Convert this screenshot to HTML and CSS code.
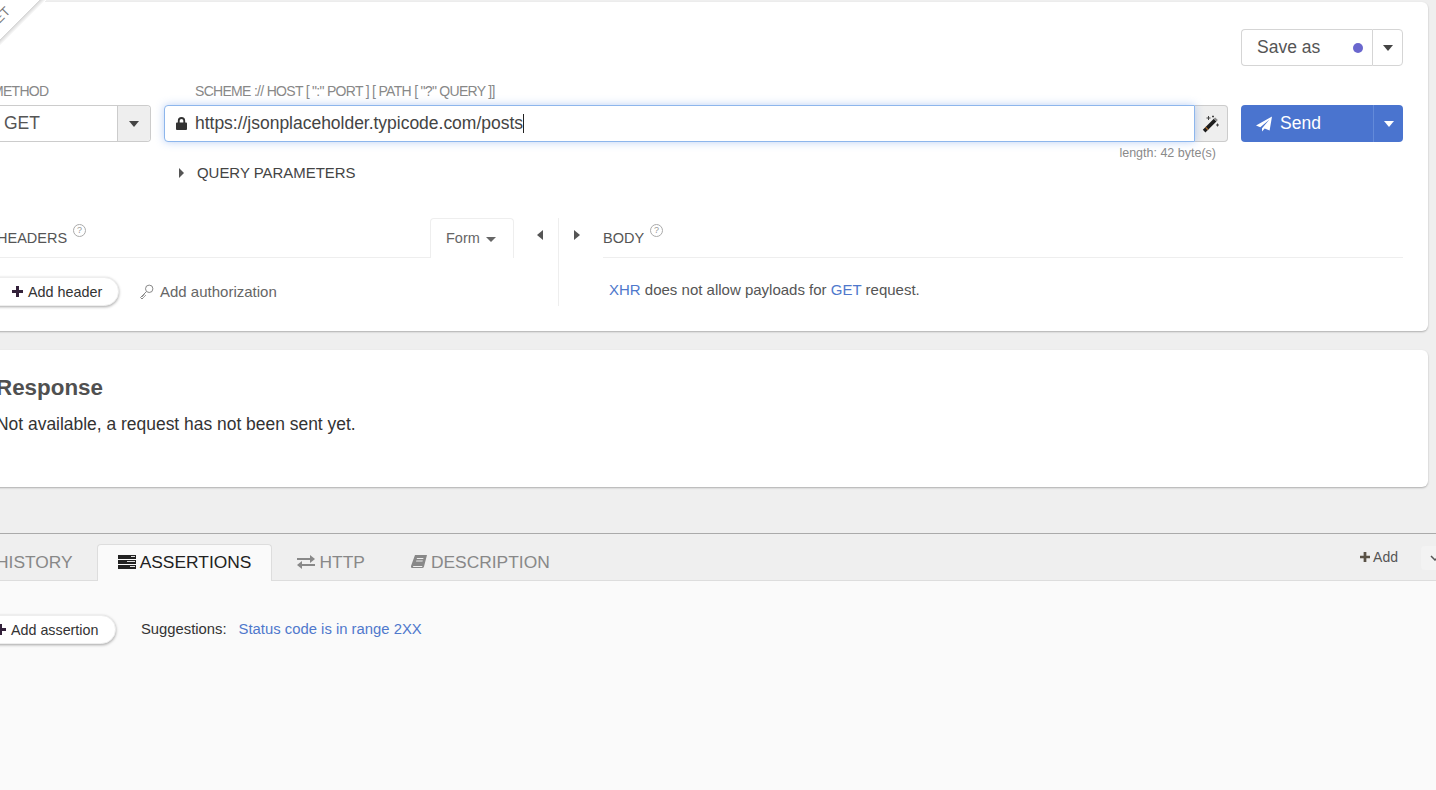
FILE: index.html
```html
<!DOCTYPE html>
<html lang="en">
<head>
<meta charset="utf-8">
<title>Request</title>
<link rel="stylesheet" href="styles.css">
</head>
<body>
<main class="page">
  <section class="card request">
    <div class="ribbon"><span class="ribbon-text">GET</span></div>
    <div class="save-row">
      <div class="split save">
        <button class="split-main save-main"><span>Save as</span><i class="dot"></i></button>
        <button class="split-caret"><i class="caret dark"></i></button>
      </div>
    </div>
    <div class="form-row">
      <div class="method-col">
        <label class="field-label">METHOD</label>
        <div class="select">
          <span class="select-value">GET</span>
          <span class="addon"><i class="caret dark"></i></span>
        </div>
      </div>
      <div class="url-col">
        <label class="field-label url-label">SCHEME :// HOST [ ":" PORT ] [ PATH [ "?" QUERY ]]</label>
        <div class="url-group">
          <div class="url-input">
            <svg class="lock" viewBox="0 0 12 14" width="11" height="13"><path fill="#333" d="M1 6h1V4a4 4 0 0 1 8 0v2h1a1 1 0 0 1 1 1v6a1 1 0 0 1-1 1H1a1 1 0 0 1-1-1V7a1 1 0 0 1 1-1zm3 0h4V4a2 2 0 0 0-4 0z"/></svg>
            <span class="url-text">https://jsonplaceholder.typicode.com/posts</span><i class="cursor"></i>
          </div>
          <span class="wand">
            <svg viewBox="0 0 18 18" width="18" height="18"><path fill="#1c1c1c" d="M.8 14.800 11.800 3.800l2.600 2.600L3.400 17.400z"/><path fill="#a8692c" d="m3.900 11.700 2.600 2.600-.9.900L3 12.600z"/><path fill="#8a8a8a" d="m11.800 3.800 1.400-1.400 2.600 2.600-1.400 1.400z"/><path stroke="#444" stroke-width="1" d="M6.500 1v4M4.500 3h4M15.500 8.500v3M14 10h3M11 .5v2M10 1.500h2"/></svg>
          </span>
        </div>
        <div class="length">length: 42 byte(s)</div>
        <div class="query"><i class="tri-right small"></i><span>QUERY PARAMETERS</span></div>
      </div>
      <div class="send-col">
        <div class="split send">
          <button class="split-main send-main">
            <svg viewBox="0 0 16 16" width="16" height="16"><path fill="#fff" d="M16 .5 13.600 14.500 8.700 12.400 6 15.500V12.300L13.500 3.500 4.300 11.300 0 9.500z"/></svg>
            <span>Send</span>
          </button>
          <button class="split-caret send-caret"><i class="caret light"></i></button>
        </div>
      </div>
    </div>
    <div class="editors">
      <div class="headers-col">
        <div class="editor-head">
          <span class="editor-title">HEADERS</span><span class="help">?</span>
          <span class="form-tab">Form <i class="caret small"></i></span>
        </div>
        <div class="headers-actions">
          <button class="pill">
            <svg class="plus" viewBox="0 0 11 11" width="11" height="11"><path fill="#33213a" d="M4 0h3v4h4v3H7v4H4V7H0V4h4z"/></svg>
            Add header</button>
          <span class="auth">
            <svg viewBox="0 0 15 16" width="15" height="16" fill="none" stroke="#888"><circle cx="10.200" cy="4.800" r="3.700"/><path d="M7.500 7.500 1.500 13.500l1.500 1.500 1.500-1.500-1-1 1-1 1 1 1-1-1-1"/></svg>
            Add authorization
          </span>
        </div>
      </div>
      <div class="splitter"><i class="tri-left"></i><span class="split-line"></span><i class="tri-right"></i></div>
      <div class="body-col">
        <div class="editor-head body-head"><span class="editor-title">BODY</span><span class="help">?</span></div>
        <p class="body-note"><a class="link">XHR</a> does not allow payloads for <a class="link">GET</a> request.</p>
      </div>
    </div>
  </section>
  <section class="card response">
    <h2>Response</h2>
    <p>Not available, a request has not been sent yet.</p>
  </section>
  <section class="panel">
    <div class="tabs">
      <span class="tab">HISTORY</span>
      <span class="tab active">
        <svg viewBox="0 0 18 14" width="18" height="14"><path fill="#222" d="M0 0h18v4H0zM0 5h18v4H0zM0 10h18v4H0z"/><path fill="#ddd" d="M13 1h4v1h-4zM9 6h8v1H9zM12 11h5v1h-5z"/></svg>
        ASSERTIONS</span>
      <span class="tab">
        <svg viewBox="0 0 18 14" width="18" height="14"><path fill="#888" d="M0 3h13V0l5 4-5 4V5H0zM18 9H5V6l-5 4 5 4v-3h13z"/></svg>
        HTTP</span>
      <span class="tab">
        <svg viewBox="0 0 16 14" width="16" height="14"><path fill="#888" d="M4 0h12l-3 11.500a2 2 0 0 1-2 1.500H1.500A1.500 1.500 0 0 1 0 11z"/><path fill="#eee" d="M2 11h9.500l-.5 1H2.300zM6 3h6.500l-.3 1H5.700zM5.300 5.500h6.500l-.3 1H5z"/></svg>
        DESCRIPTION</span>
      <span class="tabs-spacer"></span>
      <span class="add">
        <svg class="add-plus" viewBox="0 0 11 11" width="10" height="10"><path fill="#5a5246" d="M4 0h3v4h4v3H7v4H4V7H0V4h4z"/></svg>Add</span>
      <span class="chev"><svg viewBox="0 0 10 6" width="10" height="6" fill="none" stroke="#555" stroke-width="1.500"><path d="m1 1 4 4 4-4"/></svg></span>
    </div>
    <div class="panel-body">
      <button class="pill assertion">
        <svg class="plus" viewBox="0 0 11 11" width="11" height="11"><path fill="#33213a" d="M4 0h3v4h4v3H7v4H4V7H0V4h4z"/></svg>
        Add assertion</button>
      <span class="suggest">Suggestions:</span>
      <a class="link suggest-link">Status code is in range 2XX</a>
    </div>
  </section>
</main>
</body>
</html>
```

FILE: styles.css
```css
* { box-sizing: border-box; }
html, body { margin: 0; height: 100%; overflow: hidden; }
body { background: #efefef; color: #444; font-family: "Liberation Sans", Arial, sans-serif; font-size: 14px; }
button { font: inherit; color: inherit; padding: 0; }
.page { display: flex; flex-direction: column; height: 790px; padding-top: 2px; overflow: hidden; }

.card { position: relative; background: #fff; border-radius: 6px; box-shadow: 0 1px 2px rgba(0,0,0,.28); width: 1458px; margin-left: -30px; }
.request { height: 329px; padding: 27px 25px 0 30px; }
.response { height: 137px; margin-top: 19px; padding: 25px 0 0 26px; color: #333; }
.response h2 { margin: 0; font-size: 22.400px; line-height: 26px; font-weight: 700; color: #505050; }
.response p { margin: 13px 0 0; font-size: 17.450px; line-height: 20px; }

.ribbon { position: absolute; left: 30px; top: -2px; width: 50px; height: 50px; background: linear-gradient(135deg, #fff 0, #fff 39%, #d4d4d4 39.500%, #fff 46%, rgba(255,255,255,0) 46.500%); overflow: hidden; }
.ribbon-text { position: absolute; left: -15px; top: 11px; font-size: 13px; color: #777; transform: rotate(-45deg); }

.save-row { display: flex; justify-content: flex-end; height: 37px; }
.split { display: flex; width: 162px; height: 37px; border-radius: 4px; }
.split-main { display: flex; align-items: center; flex: 1; background: #fff; border: 1px solid #d5d5d5; border-right: 0; border-radius: 4px 0 0 4px; }
.split-caret { display: flex; align-items: center; justify-content: center; width: 31px; background: #fff; border: 1px solid #d5d5d5; border-radius: 0 4px 4px 0; }
.save-main { justify-content: space-between; padding: 0 9px 0 15px; font-size: 17.500px; color: #555; }
.dot { width: 10px; height: 10px; border-radius: 50%; background: #6a67ce; }
.caret { display: block; width: 0; height: 0; border-left: 5.500px solid transparent; border-right: 5.500px solid transparent; border-top: 6px solid #444; }
.caret.light { border-top-color: #fff; }
.caret.small { display: inline-block; border-left-width: 5px; border-right-width: 5px; border-top: 5px solid #666; margin-left: 2px; vertical-align: 1px; }

.form-row { display: flex; gap: 13px; margin-top: 16px; height: 112px; }
.method-col { width: 181px; margin-left: -30px; flex: none; }
.field-label { display: block; height: 23px; font-size: 14px; line-height: 19px; color: #888; letter-spacing: -.7px; white-space: nowrap; }
.method-col .field-label { margin-left: 22px; }
.select { display: flex; height: 37px; border: 1px solid #ccc; border-left: 0; border-radius: 0 4px 4px 0; }
.select-value { flex: 1; padding-left: 34px; font-size: 17.500px; line-height: 35px; color: #555; }
.addon { display: flex; align-items: center; justify-content: center; width: 33px; background: #eee; border-left: 1px solid #ccc; border-radius: 0 4px 4px 0; }
.url-col { position: relative; flex: 1; min-width: 0; }
.url-label { padding-left: 31px; }
.url-group { display: flex; height: 37px; }
.url-input { display: flex; align-items: center; flex: 1; background: #fff; border: 1px solid #8db6ec; border-radius: 4px 0 0 4px; box-shadow: 0 0 8px rgba(102,150,233,.45); padding-left: 11px; position: relative; z-index: 1; }
.lock { margin-right: 8px; flex: none; }
.url-text { font-size: 17.500px; color: #444; letter-spacing: -.02px; }
.cursor { width: 1px; height: 19px; background: #222; }
.wand { display: flex; align-items: center; justify-content: center; width: 33px; background: #eee; border: 1px solid #ccc; border-left: 0; border-radius: 0 4px 4px 0; }
.length { height: 20px; text-align: right; padding-right: 12px; font-size: 12.500px; line-height: 23px; color: #8a8a8a; }
.query { display: flex; align-items: center; gap: 13px; margin: -1px 0 0 15px; font-size: 14.950px; line-height: 24px; color: #444; }
.tri-right { display: block; width: 0; height: 0; border-top: 5.500px solid transparent; border-bottom: 5.500px solid transparent; border-left: 6px solid #555; }
.tri-right.small { border-top-width: 5px; border-bottom-width: 5px; border-left-width: 5px; }
.tri-left { display: block; width: 0; height: 0; border-top: 5.500px solid transparent; border-bottom: 5.500px solid transparent; border-right: 6px solid #555; }
.send-col { width: 162px; flex: none; padding-top: 23px; }
.send { height: 37px; }
.send-main { gap: 8px; background: #4a74cf; border: 0; border-radius: 4px 0 0 4px; padding-left: 15px; color: #fff; font-size: 17.500px; }
.send-caret { background: #4a74cf; border: 0; border-left: 1px solid #638ad9; width: 30px; }

.editors { display: flex; margin-top: 24px; margin-left: -30px; }
.headers-col { width: 544px; flex: none; }
.editor-head { display: flex; align-items: flex-end; position: relative; height: 40px; border-bottom: 1px solid #eee; }
.editor-title { font-size: 14.500px; line-height: 24px; padding-bottom: 7px; color: #555; }
.headers-col .editor-title { margin-left: 27px; }
.help { display: inline-flex; align-items: center; justify-content: center; width: 13px; height: 13px; margin: 0 0 20px 6px; border: 1px solid #aaa; border-radius: 50%; font-size: 9px; line-height: 1; color: #999; }
.form-tab { position: absolute; right: 0; top: 0; width: 84px; height: 40px; background: #fff; border: 1px solid #eee; border-bottom: 0; border-radius: 4px 4px 0 0; padding-left: 15px; font-size: 14.500px; line-height: 39px; color: #666; }
.headers-actions { display: flex; align-items: center; margin-top: 19px; }
.pill { display: inline-flex; align-items: center; height: 29px; background: #fff; border: 1px solid #eee; border-radius: 15px; box-shadow: 0 1px 3px rgba(0,0,0,.35); font-size: 14.400px; color: #333; white-space: nowrap; }
.headers-actions .pill { width: 149px; padding-left: 41px; }
.plus { margin-right: 5px; flex: none; }
.auth { display: inline-flex; align-items: center; gap: 6px; margin-left: 20px; font-size: 15px; color: #666; }
.splitter { display: flex; width: 89px; flex: none; height: 88px; justify-content: center; }
.splitter .tri-left { margin: 12px 15px 0 0; }
.split-line { width: 1px; height: 88px; background: #eee; }
.splitter .tri-right { margin: 12px 0 0 15px; }
.body-col { flex: 1; min-width: 0; }
.body-note { margin: 23px 0 0 6px; font-size: 15px; line-height: 18px; color: #555; }
.link { color: #4f78cc; }

.panel { display: flex; flex-direction: column; flex: 1; margin-top: 46px; border-top: 1px solid #aaa; background: #efefef; }
.tabs { display: flex; align-items: flex-end; height: 47px; border-bottom: 1px solid #ddd; margin-left: -25px; }
.tab { display: inline-flex; align-items: center; gap: 4px; height: 37px; padding: 0 20px 3px; margin-right: 4px; font-size: 17.400px; line-height: 30px; color: #888; border: 1px solid transparent; border-bottom: 0; border-radius: 4px 4px 0 0; white-space: nowrap; margin-bottom: -1px; }
.tab:first-child { padding-right: 19px; }
.tab.active { background: #fafafa; border-color: #ddd; color: #222; }
.tabs-spacer { flex: 1; }
.add { display: inline-flex; align-items: center; gap: 3px; align-self: flex-start; margin: 14px 23px 0 0; font-size: 14px; line-height: 18px; color: #555; white-space: nowrap; }
.add-plus { flex: none; }
.chev { align-self: flex-start; display: flex; align-items: center; padding-left: 9px; width: 15px; height: 24px; margin-top: 12px; background: #f3f3f3; border-radius: 4px 0 0 4px; overflow: hidden; flex: none; }
.chev svg { flex: none; }
.panel-body { flex: 1; display: flex; align-items: flex-start; background: #fafafa; padding-top: 34px; margin-left: -30px; }
.pill.assertion { width: 146px; height: 29px; padding-left: 24px; font-size: 14.300px; }
.suggest { margin-left: 25px; font-size: 14.800px; line-height: 28px; color: #333; }
.suggest-link { margin-left: 12px; font-size: 14.850px; line-height: 28px; }
```
